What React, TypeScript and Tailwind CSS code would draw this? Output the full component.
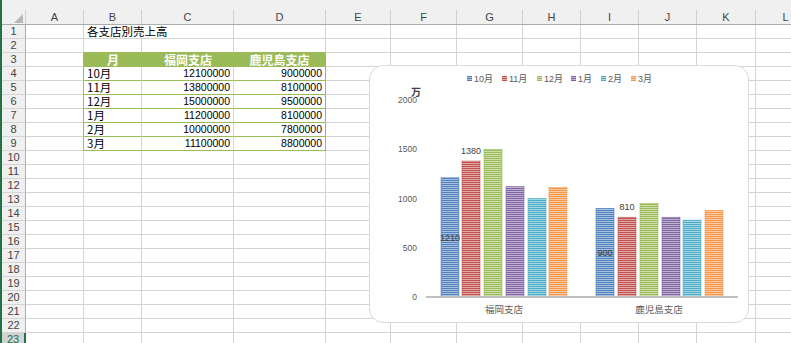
import React from 'react';

const cols = [
  { name: 'A', w: 'w-[58px]' },
  { name: 'B', w: 'w-[58px]' },
  { name: 'C', w: 'w-[92px]' },
  { name: 'D', w: 'w-[92px]' },
  { name: 'E', w: 'w-[65px]' },
  { name: 'F', w: 'w-[66px]' },
  { name: 'G', w: 'w-[66px]' },
  { name: 'H', w: 'w-[58px]' },
  { name: 'I', w: 'w-[58px]' },
  { name: 'J', w: 'w-[58px]' },
  { name: 'K', w: 'w-[59px]' },
  { name: 'L', w: 'w-[60px]' },
];

const tableRows = [
  ['10月', '12100000', '9000000'],
  ['11月', '13800000', '8100000'],
  ['12月', '15000000', '9500000'],
  ['1月', '11200000', '8100000'],
  ['2月', '10000000', '7800000'],
  ['3月', '11100000', '8800000'],
];

const series = [
  { name: '10月', c: '#4f81bd', l: '#a9c1df' },
  { name: '11月', c: '#c0504d', l: '#e2aaa8' },
  { name: '12月', c: '#9bbb59', l: '#cfdeae' },
  { name: '1月', c: '#8064a2', l: '#c1b3d2' },
  { name: '2月', c: '#4bacc6', l: '#a7d7e4' },
  { name: '3月', c: '#f79646', l: '#fbcba4' },
];

const fukuoka = [1210, 1380, 1500, 1120, 1000, 1110];
const kagoshima = [900, 810, 950, 810, 780, 880];
const fukuokaX = [441, 462, 484, 506, 528, 549];
const kagoshimaX = [596, 618, 640, 662, 683, 705];
const legendX = [467, 502, 537, 571, 601, 631];

const yOf = (v: number) => 297 - v * 0.0985;

const fontUi = "font-['Liberation_Sans','Noto_Sans_CJK_JP',sans-serif]";
const fontJp = "font-['Noto_Sans_CJK_JP',sans-serif]";

const Cell: React.FC<{ row: number; col: number }> = ({ row, col }) => {
  const w = cols[col].w;
  const inTable = row >= 3 && row <= 9 && col >= 1 && col <= 3;

  // table header (B3:D3)
  if (row === 3 && inTable) {
    const label = ['月', '福岡支店', '鹿児島支店'][col - 1];
    return (
      <div
        className={`${w} h-full shrink-0 flex items-center justify-center bg-[#9bbb59] border-b border-[#9bbb59] ${col === 3 ? 'border-r' : ''} text-white font-bold text-[12px] leading-none ${fontJp}`}
      >
        {label}
      </div>
    );
  }

  if (inTable) {
    const v = tableRows[row - 4][col - 1];
    return (
      <div
        className={`${w} h-full shrink-0 flex items-center border-b border-b-[#9bbb59] border-r ${col === 3 ? 'border-r-[#9bbb59] justify-end pr-[3px]' : col === 2 ? 'border-r-[#d4d4d4] justify-end pr-[3px]' : 'border-r-[#d4d4d4] pl-[3px]'} text-black leading-none`}
      >
        {col === 1 ? (
          <span className={`text-[11.5px] ${fontJp}`}>{v}</span>
        ) : (
          <span className={`text-[10.5px] ${fontUi}`}>{v}</span>
        )}
      </div>
    );
  }

  const greenRight = col === 0 && row >= 3 && row <= 9;
  const greenBottom = row === 2 && col >= 1 && col <= 3;

  return (
    <div
      className={`${w} h-full shrink-0 flex items-center border-r border-b ${greenRight ? 'border-r-[#9bbb59]' : 'border-r-[#d4d4d4]'} ${greenBottom ? 'border-b-[#9bbb59]' : 'border-b-[#d4d4d4]'} leading-none`}
    >
      {row === 1 && col === 1 && (
        <span className={`pl-[3px] text-[11.5px] text-black whitespace-nowrap ${fontJp}`}>各支店別売上高</span>
      )}
    </div>
  );
};

const Chart: React.FC = () => (
  <div className="absolute left-[367px] top-[65px] w-[380px] h-[258px] rounded-[14px] border border-[#d9d9d9] bg-white">
    <svg className={`absolute -left-px -top-px ${fontUi}`} width={380} height={258}>
      <defs>
        {series.map((s, i) => (
          <pattern key={i} id={`st${i}`} width={4} height={2} patternUnits="userSpaceOnUse">
            <rect width={4} height={2} fill={s.l} />
            <rect width={4} height={1} fill={s.c} />
          </pattern>
        ))}
      </defs>
      <g transform="translate(-369,-65)">
        {/* legend */}
        {series.map((s, i) => (
          <g key={s.name}>
            <rect x={legendX[i]} y={76} width={5} height={5} fill={`url(#st${i})`} />
            <text x={legendX[i] + 7} y={82} fontSize={9} fill="#595959">
              {s.name}
            </text>
          </g>
        ))}

        {/* value axis */}
        <text x={411} y={96} fontSize={10} fontWeight="bold" fill="#404040" className={fontJp}>
          万
        </text>
        {[0, 500, 1000, 1500, 2000].map((v) => (
          <text key={v} x={417} y={yOf(v) + 3} fontSize={8.5} fill="#595959" textAnchor="end">
            {v}
          </text>
        ))}

        {/* bars */}
        {fukuoka.map((v, i) => (
          <rect
            key={`f${i}`}
            x={fukuokaX[i]}
            y={yOf(v)}
            width={18}
            height={297 - yOf(v)}
            fill={`url(#st${i})`}
            stroke={series[i].c}
            strokeWidth={0.6}
          />
        ))}
        {kagoshima.map((v, i) => (
          <rect
            key={`k${i}`}
            x={kagoshimaX[i]}
            y={yOf(v)}
            width={18}
            height={297 - yOf(v)}
            fill={`url(#st${i})`}
            stroke={series[i].c}
            strokeWidth={0.6}
          />
        ))}

        {/* category axis */}
        <rect x={426} y={296} width={312} height={2} fill="#bfbfbf" />

        {/* data labels */}
        <text x={471} y={154} fontSize={9} fill="#404040" textAnchor="middle">1380</text>
        <text x={450} y={241} fontSize={9} fill="#404040" textAnchor="middle">1210</text>
        <text x={627} y={210} fontSize={9} fill="#404040" textAnchor="middle">810</text>
        <text x={605} y={256} fontSize={9} fill="#404040" textAnchor="middle">900</text>

        <text x={504} y={313} fontSize={9.5} fill="#595959" textAnchor="middle" className={fontJp}>
          福岡支店
        </text>
        <text x={659} y={313} fontSize={9.5} fill="#595959" textAnchor="middle" className={fontJp}>
          鹿児島支店
        </text>
      </g>
    </svg>
  </div>
);

const App: React.FC = () => {
  const rows = Array.from({ length: 23 }, (_, i) => i + 1);

  return (
    <div className={`relative w-[791px] h-[343px] overflow-hidden bg-white border-l-2 border-[#217346] ${fontUi}`}>
      {/* strip above headers */}
      <div className="h-[10px] bg-[#f0f0f0]" />

      {/* column headers */}
      <div className="flex h-[14px] bg-[#f0f0f0] border-b border-[#ababab] box-content">
        <div className="w-[24px] shrink-0 h-full border-r border-[#d0d0d0] flex items-end justify-end pr-[2px] pb-[1px]">
          <svg width={9} height={9}>
            <polygon points="9,0 9,9 0,9" fill="#b7b7b7" />
          </svg>
        </div>
        {cols.map((c) => (
          <div
            key={c.name}
            className={`${c.w} shrink-0 h-full border-r border-[#d0d0d0] flex items-center justify-center text-[11px] text-[#444] leading-none`}
          >
            {c.name}
          </div>
        ))}
      </div>

      {/* rows */}
      {rows.map((r) => (
        <div key={r} className="flex h-[14px]">
          <div
            className={`w-[24px] shrink-0 h-full flex items-center justify-center text-[11px] leading-none border-b ${
              r === 23
                ? 'bg-[#d2d2d2] text-[#217346] border-r-2 border-r-[#217346] border-b-[#d2d2d2]'
                : 'bg-[#f0f0f0] text-[#444] border-r border-r-[#ababab] border-b-[#d4d4d4]'
            }`}
          >
            {r}
          </div>
          {cols.map((c, ci) => (
            <Cell key={c.name} row={r} col={ci} />
          ))}
        </div>
      ))}

      <Chart />
    </div>
  );
};

export default App;
